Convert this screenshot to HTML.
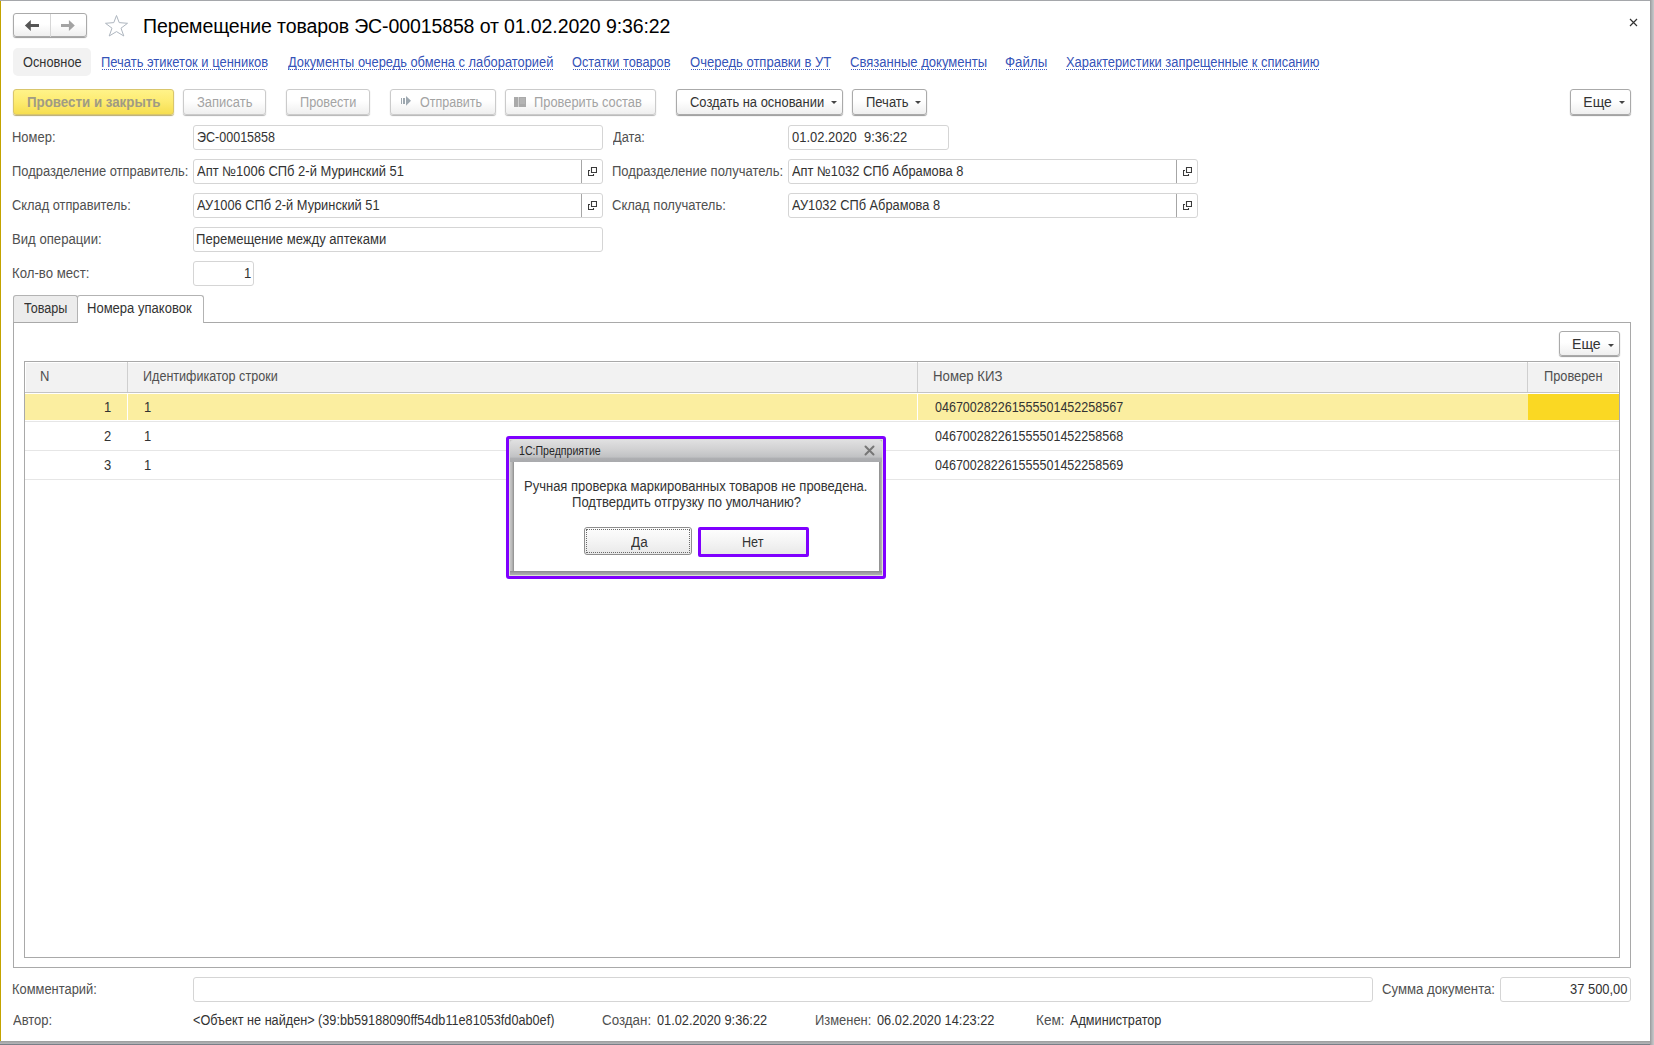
<!DOCTYPE html>
<html><head><meta charset="utf-8">
<style>
*{box-sizing:border-box;margin:0;padding:0}
html,body{width:1654px;height:1045px;overflow:hidden;background:#fff}
body{position:relative;font-family:"Liberation Sans",sans-serif;font-size:14px;color:#333}
.a{position:absolute;white-space:nowrap}
.t{position:absolute;white-space:nowrap;line-height:16px;transform-origin:0 0}
.btn{position:absolute;height:26px;border:1px solid #aaaaaa;border-radius:3px;background:linear-gradient(#fff 0%,#fff 45%,#efefef 100%);box-shadow:0 1px 1px #9a9a9a}
.dbt{border-color:#cbcbcb;box-shadow:0 1px 1px #b4b4b4}
.tri{position:absolute;width:0;height:0;border-left:3px solid transparent;border-right:3px solid transparent;border-top:3px solid #444}
.fld{position:absolute;height:25px;border:1px solid #d5d5d5;border-radius:3px;background:#fff}
.ob{position:absolute;right:0;top:0;width:21px;height:23px;border-left:1px solid #a6a6a6}
.ul{position:absolute;height:1px;background-image:linear-gradient(90deg,#3f5cc0 50%,transparent 50%);background-size:2px 1px}
</style></head><body>
<div class="a" style="left:0;top:0;width:1654px;height:1px;background:#a5a7ab"></div>
<div class="a" style="left:0;top:1px;width:1px;height:1040px;background:#c3a300"></div>
<div class="a" style="left:1650px;top:0;width:4px;height:1045px;background:linear-gradient(90deg,#98999b,#b4b5b8 50%,#c8c9cb)"></div>
<div class="a" style="left:0;top:1041px;width:1650px;height:4px;background:linear-gradient(#9c9c9c,#aeafb2 50%,#b2b3b6 70%,#4f5a66)"></div>
<div class="btn" style="left:13px;top:13px;width:74px;height:24px"></div>
<div class="a" style="left:50px;top:14px;width:1px;height:23px;background:#d6d6d6"></div>
<svg class="a" style="left:0;top:0" width="140" height="44">
<path d="M24.9 25.5 L30.8 20 L30.8 24 L39 24 L39 27 L30.8 27 L30.8 31 Z" fill="#555"/>
<path d="M74.8 25.5 L68.9 20 L68.9 24 L61 24 L61 27 L68.9 27 L68.9 31 Z" fill="#a3a3a3"/>
<path d="M116.5 15.5 L119.2 22.6 L127.5 23.3 L121 28.2 L123.8 36 L116.5 31.6 L109.2 36 L112 28.2 L105.5 23.3 L113.8 22.6 Z" fill="none" stroke="#aeb6bf" stroke-width="1"/>
</svg>
<svg class="a" style="left:1626px;top:15px" width="14" height="14"><path d="M4 4 L11 11 M11 4 L4 11" stroke="#333" stroke-width="1.2"/></svg>
<div class="a" style="left:143px;top:13px;font-size:19.5px;color:#000;line-height:27px;letter-spacing:-0.11px">Перемещение товаров ЭС-00015858 от 01.02.2020 9:36:22</div>
<div class="a" style="left:13px;top:48px;width:78px;height:28px;background:#f2f2f2;border-radius:5px"></div>
<div class="btn" style="left:13px;top:89px;width:161px;border-color:#d9c66c;background:linear-gradient(#fff389,#fdeb70 50%,#f6de50);box-shadow:0 1px 1px #b8ab70"></div>
<div class="btn dbt" style="left:183px;top:89px;width:83px"></div>
<div class="btn dbt" style="left:286px;top:89px;width:84px"></div>
<div class="btn dbt" style="left:390px;top:89px;width:106px"></div>
<svg class="a" style="left:395px;top:90px" width="20" height="20"><rect x="6" y="8" width="1" height="6" fill="#9ea8b0"/><rect x="8" y="8" width="2" height="6" fill="#9ea8b0"/><path d="M11 6 L16 10.8 L11 15.7 Z" fill="#9ea8b0"/></svg>
<div class="btn dbt" style="left:505px;top:89px;width:151px"></div>
<svg class="a" style="left:514px;top:97px" width="12" height="10"><rect x="0" y="0" width="12" height="10" fill="#aaaaaa"/><rect x="4" y="0" width="1" height="10" fill="#d2d2d2"/><rect x="6" y="1" width="5" height="6" fill="#b4b4b4"/></svg>
<div class="btn" style="left:676px;top:89px;width:167px"></div>
<div class="tri" style="left:831px;top:101px"></div>
<div class="btn" style="left:852px;top:89px;width:75px"></div>
<div class="tri" style="left:915px;top:101px"></div>
<div class="btn" style="left:1570px;top:89px;width:61px"></div>
<div class="tri" style="left:1619px;top:101px"></div>
<div class="fld" style="left:193px;top:125px;width:410px"></div>
<div class="fld" style="left:788px;top:125px;width:161px"></div>
<div class="fld" style="left:193px;top:159px;width:410px"><div class="ob"><svg width="9" height="9" style="position:absolute;left:6px;top:7px"><path d="M2 3.5 H0.5 V8.5 H5.5 V7 M3.5 0.5 H8.5 V5.5 H3.5 Z" fill="none" stroke="#3a3a3a" stroke-width="1.1"/></svg></div></div>
<div class="fld" style="left:788px;top:159px;width:410px"><div class="ob"><svg width="9" height="9" style="position:absolute;left:6px;top:7px"><path d="M2 3.5 H0.5 V8.5 H5.5 V7 M3.5 0.5 H8.5 V5.5 H3.5 Z" fill="none" stroke="#3a3a3a" stroke-width="1.1"/></svg></div></div>
<div class="fld" style="left:193px;top:193px;width:410px"><div class="ob"><svg width="9" height="9" style="position:absolute;left:6px;top:7px"><path d="M2 3.5 H0.5 V8.5 H5.5 V7 M3.5 0.5 H8.5 V5.5 H3.5 Z" fill="none" stroke="#3a3a3a" stroke-width="1.1"/></svg></div></div>
<div class="fld" style="left:788px;top:193px;width:410px"><div class="ob"><svg width="9" height="9" style="position:absolute;left:6px;top:7px"><path d="M2 3.5 H0.5 V8.5 H5.5 V7 M3.5 0.5 H8.5 V5.5 H3.5 Z" fill="none" stroke="#3a3a3a" stroke-width="1.1"/></svg></div></div>
<div class="fld" style="left:193px;top:227px;width:410px"></div>
<div class="fld" style="left:193px;top:261px;width:61px"></div>
<div class="a" style="left:13px;top:322px;width:1618px;height:646px;border:1px solid #a9a9a9"></div>
<div class="a" style="left:13px;top:295px;width:65px;height:27px;border:1px solid #b3b3b3;border-bottom:none;border-radius:3px 3px 0 0;background:#ececec"></div>
<div class="a" style="left:77px;top:295px;width:127px;height:28px;border:1px solid #b3b3b3;border-bottom:none;border-radius:3px 3px 0 0;background:#fff"></div>
<div class="btn" style="left:1559px;top:331px;width:61px;height:25px"></div>
<div class="tri" style="left:1608px;top:344px"></div>
<div class="a" style="left:24px;top:361px;width:1596px;height:597px;border:1px solid #a9a9a9"></div>
<div class="a" style="left:26px;top:363px;width:1592px;height:29px;background:#f2f2f2"></div>
<div class="a" style="left:25px;top:392px;width:1594px;height:1px;background:#c4c4c4"></div>
<div class="a" style="left:127px;top:362px;width:1px;height:30px;background:#cfcfcf"></div>
<div class="a" style="left:917px;top:362px;width:1px;height:30px;background:#cfcfcf"></div>
<div class="a" style="left:1527px;top:362px;width:1px;height:30px;background:#cfcfcf"></div>
<div class="a" style="left:25px;top:394px;width:1594px;height:26px;background:#fbeea0"></div>
<div class="a" style="left:1528px;top:394px;width:91px;height:26px;background:#fad823"></div>
<div class="a" style="left:127px;top:394px;width:1px;height:26px;background:#fff"></div>
<div class="a" style="left:917px;top:394px;width:1px;height:26px;background:#fff"></div>
<div class="a" style="left:25px;top:421px;width:1594px;height:1px;background:#e6e6e6"></div>
<div class="a" style="left:25px;top:450px;width:1594px;height:1px;background:#e6e6e6"></div>
<div class="a" style="left:25px;top:479px;width:1594px;height:1px;background:#e6e6e6"></div>
<div class="fld" style="left:193px;top:977px;width:1180px"></div>
<div class="fld" style="left:1500px;top:977px;width:131px"></div>
<div class="t" style="left:23.29px;top:54px;font-size:14px;font-weight:normal;color:#333333;transform:scaleX(0.9143)">Основное</div>
<div class="t" style="left:101.37px;top:54px;font-size:14px;font-weight:normal;color:#3553b8;transform:scaleX(0.9251)">Печать этикеток и ценников</div>
<div class="ul" style="left:102px;top:69px;width:166px"></div>
<div class="t" style="left:287.70px;top:54px;font-size:14px;font-weight:normal;color:#3553b8;transform:scaleX(0.9191)">Документы очередь обмена с лабораторией</div>
<div class="ul" style="left:288px;top:69px;width:265px"></div>
<div class="t" style="left:572.49px;top:54px;font-size:14px;font-weight:normal;color:#3553b8;transform:scaleX(0.9121)">Остатки товаров</div>
<div class="ul" style="left:573px;top:69px;width:98px"></div>
<div class="t" style="left:690.37px;top:54px;font-size:14px;font-weight:normal;color:#3553b8;transform:scaleX(0.9313)">Очередь отправки в УТ</div>
<div class="ul" style="left:691px;top:69px;width:140px"></div>
<div class="t" style="left:849.87px;top:54px;font-size:14px;font-weight:normal;color:#3553b8;transform:scaleX(0.9324)">Связанные документы</div>
<div class="ul" style="left:851px;top:69px;width:135px"></div>
<div class="t" style="left:1005.25px;top:54px;font-size:14px;font-weight:normal;color:#3553b8;transform:scaleX(0.9488)">Файлы</div>
<div class="ul" style="left:1006px;top:69px;width:41px"></div>
<div class="t" style="left:1066.20px;top:54px;font-size:14px;font-weight:normal;color:#3553b8;transform:scaleX(0.9226)">Характеристики запрещенные к списанию</div>
<div class="ul" style="left:1066px;top:69px;width:253px"></div>
<div class="t" style="left:26.65px;top:94px;font-size:14px;font-weight:bold;color:#a09b84;transform:scaleX(0.9511)">Провести и закрыть</div>
<div class="t" style="left:196.57px;top:94px;font-size:14px;font-weight:normal;color:#a3a3a3;transform:scaleX(0.9259)">Записать</div>
<div class="t" style="left:299.59px;top:94px;font-size:14px;font-weight:normal;color:#a3a3a3;transform:scaleX(0.9083)">Провести</div>
<div class="t" style="left:419.61px;top:94px;font-size:14px;font-weight:normal;color:#a3a3a3;transform:scaleX(0.8941)">Отправить</div>
<div class="t" style="left:534.38px;top:94px;font-size:14px;font-weight:normal;color:#a3a3a3;transform:scaleX(0.9190)">Проверить состав</div>
<div class="t" style="left:689.58px;top:94px;font-size:14px;font-weight:normal;color:#333333;transform:scaleX(0.9236)">Создать на основании</div>
<div class="t" style="left:865.57px;top:94px;font-size:14px;font-weight:normal;color:#333333;transform:scaleX(0.9273)">Печать</div>
<div class="t" style="left:1583.30px;top:94px;font-size:14px;font-weight:normal;color:#333333;transform:scaleX(1.0000)">Еще</div>
<div class="t" style="left:12.37px;top:129px;font-size:14px;font-weight:normal;color:#505050;transform:scaleX(0.9267)">Номер:</div>
<div class="t" style="left:196.50px;top:129px;font-size:14px;font-weight:normal;color:#333333;transform:scaleX(0.8953)">ЭС-00015858</div>
<div class="t" style="left:613.10px;top:129px;font-size:14px;font-weight:normal;color:#505050;transform:scaleX(0.9147)">Дата:</div>
<div class="t" style="left:791.90px;top:129px;font-size:14px;font-weight:normal;color:#333333;transform:scaleX(0.9250)">01.02.2020  9:36:22</div>
<div class="t" style="left:12.18px;top:163px;font-size:14px;font-weight:normal;color:#505050;transform:scaleX(0.9222)">Подразделение отправитель:</div>
<div class="t" style="left:196.80px;top:163px;font-size:14px;font-weight:normal;color:#333333;transform:scaleX(0.9247)">Апт №1006 СПб 2-й Муринский 51</div>
<div class="t" style="left:612.17px;top:163px;font-size:14px;font-weight:normal;color:#505050;transform:scaleX(0.9308)">Подразделение получатель:</div>
<div class="t" style="left:791.90px;top:163px;font-size:14px;font-weight:normal;color:#333333;transform:scaleX(0.9188)">Апт №1032 СПб Абрамова 8</div>
<div class="t" style="left:12.18px;top:197px;font-size:14px;font-weight:normal;color:#505050;transform:scaleX(0.9164)">Склад отправитель:</div>
<div class="t" style="left:196.80px;top:197px;font-size:14px;font-weight:normal;color:#333333;transform:scaleX(0.9171)">АУ1006 СПб 2-й Муринский 51</div>
<div class="t" style="left:612.17px;top:197px;font-size:14px;font-weight:normal;color:#505050;transform:scaleX(0.9308)">Склад получатель:</div>
<div class="t" style="left:791.90px;top:197px;font-size:14px;font-weight:normal;color:#333333;transform:scaleX(0.9149)">АУ1032 СПб Абрамова 8</div>
<div class="t" style="left:12.16px;top:231px;font-size:14px;font-weight:normal;color:#505050;transform:scaleX(0.9387)">Вид операции:</div>
<div class="t" style="left:195.87px;top:231px;font-size:14px;font-weight:normal;color:#333333;transform:scaleX(0.9332)">Перемещение между аптеками</div>
<div class="t" style="left:12.16px;top:265px;font-size:14px;font-weight:normal;color:#505050;transform:scaleX(0.9425)">Кол-во мест:</div>
<div class="t" style="left:243.90px;top:265px;font-size:14px;font-weight:normal;color:#333333;transform:scaleX(0.9290)">1</div>
<div class="t" style="left:24.00px;top:300px;font-size:14px;font-weight:normal;color:#333333;transform:scaleX(0.9000)">Товары</div>
<div class="t" style="left:87.47px;top:300px;font-size:14px;font-weight:normal;color:#333333;transform:scaleX(0.9306)">Номера упаковок</div>
<div class="t" style="left:1572.29px;top:336px;font-size:14px;font-weight:normal;color:#333333;transform:scaleX(1.0074)">Еще</div>
<div class="t" style="left:39.67px;top:368px;font-size:14px;font-weight:normal;color:#505050;transform:scaleX(0.9290)">N</div>
<div class="t" style="left:143.10px;top:368px;font-size:14px;font-weight:normal;color:#505050;transform:scaleX(0.8986)">Идентификатор строки</div>
<div class="t" style="left:932.86px;top:368px;font-size:14px;font-weight:normal;color:#505050;transform:scaleX(0.9431)">Номер КИЗ</div>
<div class="t" style="left:1543.69px;top:368px;font-size:14px;font-weight:normal;color:#505050;transform:scaleX(0.9145)">Проверен</div>
<div class="t" style="left:103.50px;top:399px;font-size:14px;font-weight:normal;color:#333333;transform:scaleX(0.9290)">1</div>
<div class="t" style="left:144.07px;top:399px;font-size:14px;font-weight:normal;color:#333333;transform:scaleX(0.9290)">1</div>
<div class="t" style="left:934.50px;top:399px;font-size:14px;font-weight:normal;color:#333333;transform:scaleX(0.8948)">046700282261555501452258567</div>
<div class="t" style="left:103.50px;top:428px;font-size:14px;font-weight:normal;color:#333333;transform:scaleX(0.9290)">2</div>
<div class="t" style="left:144.07px;top:428px;font-size:14px;font-weight:normal;color:#333333;transform:scaleX(0.9290)">1</div>
<div class="t" style="left:934.50px;top:428px;font-size:14px;font-weight:normal;color:#333333;transform:scaleX(0.8948)">046700282261555501452258568</div>
<div class="t" style="left:103.50px;top:457px;font-size:14px;font-weight:normal;color:#333333;transform:scaleX(0.9290)">3</div>
<div class="t" style="left:144.07px;top:457px;font-size:14px;font-weight:normal;color:#333333;transform:scaleX(0.9290)">1</div>
<div class="t" style="left:934.50px;top:457px;font-size:14px;font-weight:normal;color:#333333;transform:scaleX(0.8948)">046700282261555501452258569</div>
<div class="t" style="left:12.18px;top:981px;font-size:14px;font-weight:normal;color:#505050;transform:scaleX(0.9211)">Комментарий:</div>
<div class="t" style="left:1382.16px;top:981px;font-size:14px;font-weight:normal;color:#505050;transform:scaleX(0.9415)">Сумма документа:</div>
<div class="t" style="left:1570.28px;top:981px;font-size:14px;font-weight:normal;color:#333333;transform:scaleX(0.9230)">37 500,00</div>
<div class="t" style="left:13.30px;top:1012px;font-size:14px;font-weight:normal;color:#505050;transform:scaleX(0.9293)">Автор:</div>
<div class="t" style="left:192.89px;top:1012px;font-size:14px;font-weight:normal;color:#333333;transform:scaleX(0.9050)">&lt;Объект не найден&gt; (39:bb59188090ff54db11e81053fd0ab0ef)</div>
<div class="t" style="left:602.24px;top:1012px;font-size:14px;font-weight:normal;color:#505050;transform:scaleX(0.9551)">Создан:</div>
<div class="t" style="left:656.80px;top:1012px;font-size:14px;font-weight:normal;color:#333333;transform:scaleX(0.9125)">01.02.2020 9:36:22</div>
<div class="t" style="left:815.18px;top:1012px;font-size:14px;font-weight:normal;color:#505050;transform:scaleX(0.9220)">Изменен:</div>
<div class="t" style="left:877.20px;top:1012px;font-size:14px;font-weight:normal;color:#333333;transform:scaleX(0.9141)">06.02.2020 14:23:22</div>
<div class="t" style="left:1036.33px;top:1012px;font-size:14px;font-weight:normal;color:#505050;transform:scaleX(0.9704)">Кем:</div>
<div class="t" style="left:1070.30px;top:1012px;font-size:14px;font-weight:normal;color:#333333;transform:scaleX(0.9050)">Администратор</div>
<div class="a" style="left:506px;top:436px;width:380px;height:143px;border:3px solid #7f00ff;border-radius:3px"></div>
<div class="a" style="left:509px;top:439px;width:374px;height:137px;border:1px solid #dce4d2;background:linear-gradient(90deg,#c4c4c4,#acadb0 3%,#a8a9ac 97%,#b6b7b9)"></div>
<div class="a" style="left:510px;top:440px;width:372px;height:22px;border-radius:3px 3px 0 0;background:linear-gradient(#e0e0e1,#d2d2d3 40%,#c0c1c3 78%,#aeafb2 82%,#a9aaad)"></div>
<div class="a" style="left:510px;top:462px;width:4px;height:109px;background:linear-gradient(90deg,#c8c8c8,#b8b8b8 50%,#8c8c8c)"></div>
<div class="a" style="left:879px;top:462px;width:3px;height:109px;background:linear-gradient(90deg,#8c8c8c,#a8a8a8 60%,#b8b8b8)"></div>
<div class="a" style="left:510px;top:571px;width:372px;height:4px;background:linear-gradient(#8a8b8d,#a2a3a6 50%,#adaeb1)"></div>
<div class="a" style="left:514px;top:462px;width:365px;height:109px;background:#fff"></div>
<svg class="a" style="left:860px;top:441px" width="19" height="19"><path d="M5.5 5.5 L13.5 13.5 M13.5 5.5 L5.5 13.5" stroke="#767676" stroke-width="2" stroke-linecap="round"/></svg>
<div class="a" style="left:584px;top:527px;width:108px;height:28px;border:1px solid #8e8e8e;border-radius:3px;background:linear-gradient(#fdfdfd,#f4f4f4 50%,#e9e9e9)"></div>
<div class="a" style="left:586px;top:529px;width:104px;height:24px;border:1px dotted #6a6a6a"></div>
<div class="a" style="left:698px;top:527px;width:111px;height:30px;border:3px solid #7f00ff;border-radius:2px;background:linear-gradient(#fdfdfd,#f4f4f4 50%,#e9e9e9)"></div>
<div class="t" style="left:518.92px;top:443px;font-size:12px;font-weight:normal;color:#262626;transform:scaleX(0.8824)">1С:Предприятие</div>
<div class="t" style="left:523.87px;top:478px;font-size:14px;font-weight:normal;color:#333333;transform:scaleX(0.9291)">Ручная проверка маркированных товаров не проведена.</div>
<div class="t" style="left:572.07px;top:494px;font-size:14px;font-weight:normal;color:#333333;transform:scaleX(0.9332)">Подтвердить отгрузку по умолчанию?</div>
<div class="t" style="left:631.00px;top:534px;font-size:14px;font-weight:normal;color:#333333;transform:scaleX(0.9647)">Да</div>
<div class="t" style="left:742.10px;top:534px;font-size:14px;font-weight:normal;color:#333333;transform:scaleX(0.9000)">Нет</div>
</body></html>
